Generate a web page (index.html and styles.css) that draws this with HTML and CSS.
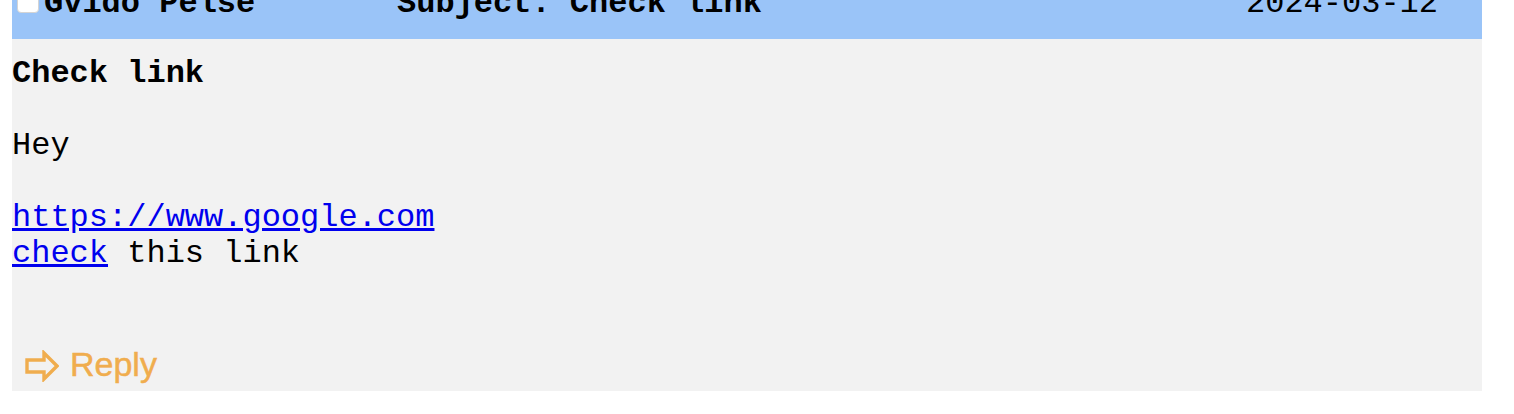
FILE: index.html
```html
<!DOCTYPE html>
<html lang="en">
<head>
<meta charset="utf-8">
<title>Mail</title>
<link rel="stylesheet" href="styles.css">
</head>
<body>
<div class="mail">
  <div class="mail-header">
    <span class="check"></span>
    <span class="from">Gvido Pelse</span>
    <span class="subject">Subject: Check link</span>
    <span class="date">2024-03-12</span>
  </div>
  <div class="mail-body">
    <div class="title">Check link</div>
    <br>
    <div class="text">Hey<br><br><a href="#">https://www.google.com</a><br><a href="#">check</a> this link</div>
  </div>
  <div class="mail-actions">
    <a class="reply" href="#"><svg class="reply-icon" width="34" height="32" viewBox="0 0 34 32"><path d="M2 10 H19 V3 L32 16 L19 29 V22 H2 Z" fill="none" stroke="#f0ad4e" stroke-width="3.4" stroke-linejoin="miter"/></svg>Reply</a>
  </div>
</div>
</body>
</html>
```
FILE: styles.css
```css
html, body {
  margin: 0;
  padding: 0;
  background: #ffffff;
}
.mail {
  width: 1470px;
  margin: -31px 0 0 12px;
  background: #f2f2f2;
  font-family: "Liberation Mono", "Courier New", monospace;
  font-size: 32px;
  color: #000;
}
.mail-header {
  display: flex;
  align-items: baseline;
  background: #9ac4f8;
  padding: 17px 0 17px 5px;
  line-height: 36px;
}
.check {
  display: inline-block;
  box-sizing: border-box;
  width: 22px;
  height: 22px;
  background: #fff;
  border: 1px solid #d4d4d4;
  border-radius: 4px;
  margin-right: 5px;
  vertical-align: -1px;
  position: relative;
  top: 1px;
}
.from {
  width: 353px;
  font-weight: bold;
}
.subject {
  flex: 1;
  font-weight: bold;
}
.date {
  margin-right: 44px;
}
.mail-body {
  padding-top: 17px;
  line-height: 36px;
}
.title {
  font-weight: bold;
}
.text a {
  color: #0000ee;
  text-decoration: underline;
}
.mail-actions {
  padding: 73px 0 0 13px;
}
.reply {
  display: inline-flex;
  align-items: center;
  gap: 11px;
  font-family: "Liberation Sans", Arial, sans-serif;
  font-size: 34px;
  line-height: 39px;
  color: #f0ad4e;
  text-decoration: none;
  -webkit-text-stroke: 0.5px #f0ad4e;
}
.reply-icon {
  display: block;
  position: relative;
  top: 1px;
}
```
